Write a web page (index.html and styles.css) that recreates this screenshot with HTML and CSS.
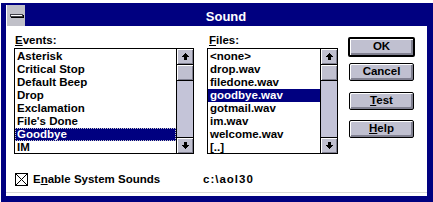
FILE: index.html
```html
<!DOCTYPE html>
<html>
<head>
<meta charset="utf-8">
<title>Sound</title>
<link rel="stylesheet" href="styles.css">
</head>
<body>
<div class="window">
  <div class="titlebar">
    <div class="sysmenu"><span class="bar"></span></div>
    <div class="title">Sound</div>
  </div>
  <div class="body">
    <div class="main">
      <div class="group events">
        <div class="label"><u>E</u>vents:</div>
        <div class="listbox">
          <ul class="items">
            <li>Asterisk</li>
            <li>Critical Stop</li>
            <li>Default Beep</li>
            <li>Drop</li>
            <li>Exclamation</li>
            <li>File's Done</li>
            <li class="sel focus">Goodbye</li>
            <li>IM</li>
          </ul>
          <div class="scrollbar">
            <div class="sbtn up"><svg width="7" height="7" viewBox="0 0 7 7"><path d="M3 0h1v1h1v1h1v1h1v1H5v3H2V4H0V3h1V2h1V1h1z"/></svg></div>
            <div class="thumb"></div>
            <div class="track"></div>
            <div class="sbtn down"><svg width="7" height="7" viewBox="0 0 7 7"><path d="M2 0h3v3h2v1H6v1H5v1H4v1H3V6H2V5H1V4H0V3h2z"/></svg></div>
          </div>
        </div>
      </div>
      <div class="group files">
        <div class="label"><u>F</u>iles:</div>
        <div class="listbox">
          <ul class="items">
            <li>&lt;none&gt;</li>
            <li>drop.wav</li>
            <li>filedone.wav</li>
            <li class="sel">goodbye.wav</li>
            <li>gotmail.wav</li>
            <li>im.wav</li>
            <li>welcome.wav</li>
            <li>[..]</li>
          </ul>
          <div class="scrollbar">
            <div class="sbtn up"><svg width="7" height="7" viewBox="0 0 7 7"><path d="M3 0h1v1h1v1h1v1h1v1H5v3H2V4H0V3h1V2h1V1h1z"/></svg></div>
            <div class="thumb"></div>
            <div class="track"></div>
            <div class="sbtn down"><svg width="7" height="7" viewBox="0 0 7 7"><path d="M2 0h3v3h2v1H6v1H5v1H4v1H3V6H2V5H1V4H0V3h2z"/></svg></div>
          </div>
        </div>
      </div>
      <div class="buttons">
        <div class="btn default ok">OK</div>
        <div class="btn cancel">Cancel</div>
        <div class="btn test"><u>T</u>est</div>
        <div class="btn help"><u>H</u>elp</div>
      </div>
    </div>
    <div class="footer">
      <div class="opt">
        <span class="check"><svg width="11" height="11" viewBox="0 0 11 11"><path d="M0 0L11 11M11 0L0 11" stroke="#000" stroke-width="1" fill="none"/></svg></span>
        <span class="optlabel">E<u>n</u>able System Sounds</span>
      </div>
      <div class="path">c:\aol30</div>
    </div>
    <div class="sep"></div>
  </div>
</div>
</body>
</html>
```
FILE: styles.css
```css
html, body {
  margin: 0;
  padding: 0;
  background: #ffffff;
}
body {
  font-family: "Liberation Sans", Arial, sans-serif;
  font-weight: bold;
  font-size: 11.5px;
  color: #000;
}
u {
  text-decoration: underline;
  text-underline-offset: 1px;
}
.window {
  margin: 3px 0 0 1px;
  width: 421px;
  border-style: solid;
  border-color: #000080;
  border-width: 2px 6px 6px 5px;
  background: #fff;
}
.titlebar {
  display: flex;
  height: 21px;
  margin-left: 1px;
  background: #000080;
}
.sysmenu {
  width: 18px;
  background: #c0c0c8;
  display: flex;
  align-items: center;
  justify-content: center;
}
.sysmenu .bar {
  display: block;
  width: 11px;
  height: 1px;
  background: #fff;
  border: 1px solid #404048;
  box-shadow: 1px 1px 0 #000;
}
.title {
  flex: 1;
  text-align: center;
  color: #fff;
  font-size: 13px;
  line-height: 21px;
  padding-top: 1px;
  box-sizing: border-box;
}
.body {
  height: 170px;
  box-sizing: border-box;
  padding: 7px 0 0 8px;
  display: flex;
  flex-direction: column;
}
.main {
  display: flex;
  align-items: flex-start;
}
.label {
  height: 14px;
  line-height: 14px;
  margin-bottom: 1px;
  padding-left: 1px;
}
.files .label {
  padding-left: 2px;
}
.events {
  width: 180px;
  margin-right: 13px;
}
.files {
  width: 131px;
  margin-right: 10px;
}
.listbox {
  display: flex;
  height: 106px;
  box-sizing: border-box;
  border: 1px solid #000;
}
.items {
  list-style: none;
  margin: 0;
  padding: 1px 0 0 0;
  flex: 1;
  overflow: hidden;
  min-width: 0;
}
.items li {
  height: 13px;
  line-height: 13px;
  padding-left: 2px;
  white-space: nowrap;
  box-sizing: border-box;
}
.items li.sel {
  background: #000080;
  color: #fff;
}
.items li.focus {
  outline: 1px dotted #c8c8c8;
  outline-offset: -1px;
}
.scrollbar {
  width: 16px;
  border-left: 1px solid #000;
  display: flex;
  flex-direction: column;
  background: #c4c4d8;
}
.sbtn, .thumb {
  background: #c0c0d0;
  box-shadow: inset 1px 1px 0 #fff, inset -1px -1px 0 #808090;
  display: flex;
  align-items: center;
  justify-content: center;
}
.sbtn {
  height: 15px;
}
.sbtn.up {
  border-bottom: 1px solid #000;
}
.sbtn.down {
  border-top: 1px solid #000;
}
.thumb {
  height: 16px;
  border-bottom: 1px solid #000;
  box-sizing: border-box;
}
.track {
  flex: 1;
}
.buttons {
  width: 67px;
  display: flex;
  flex-direction: column;
  align-items: center;
  padding-top: 4px;
}
.btn {
  width: 65px;
  height: 18px;
  box-sizing: border-box;
  border: 1px solid #000;
  border-radius: 2px;
  background: #c0c0d0;
  box-shadow: inset 1px 1px 0 #fff, inset -1px -1px 0 #808090, inset -2px -2px 0 #808090;
  text-align: center;
  line-height: 15px;
}
.btn.default {
  width: 67px;
  height: 20px;
  border-width: 2px;
  line-height: 15px;
}
.btn.cancel {
  margin-top: 6px;
}
.btn.test {
  margin-top: 11px;
}
.btn.help {
  margin-top: 10px;
}
.footer {
  display: flex;
  align-items: center;
  height: 13px;
  margin-top: 19px;
  line-height: 13px;
}
.opt {
  width: 189px;
  display: flex;
  align-items: center;
  padding-left: 1px;
  box-sizing: border-box;
}
.check {
  width: 13px;
  height: 13px;
  box-sizing: border-box;
  border: 1px solid #000;
  display: block;
}
.check svg {
  display: block;
}
.optlabel {
  margin-left: 5px;
}
.path {
  letter-spacing: 1px;
}
.sep {
  margin-top: auto;
  margin-left: -8px;
  height: 1px;
  background: #d8d8d8;
  margin-bottom: 3px;
}
```
